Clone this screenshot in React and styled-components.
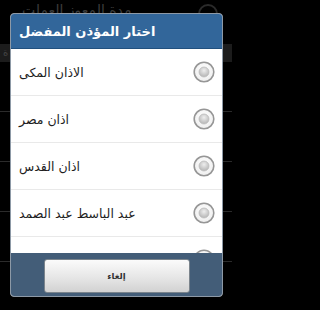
import styled, { createGlobalStyle } from 'styled-components';

const GlobalStyle = createGlobalStyle`
  html, body {
    margin: 0;
    padding: 0;
    background: #000;
  }
  body {
    width: 232px;
    height: 310px;
    overflow: hidden;
    font-family: "DejaVu Sans", "Noto Sans", sans-serif;
  }
`;

// Background activity (dimmed)
const Screen = styled.div`
  position: relative;
  width: 232px;
  height: 310px;
  background: #000;
  overflow: hidden;
`;

const BgTop = styled.div`
  height: 44px;
  display: flex;
  justify-content: space-between;
  align-items: flex-start;
  padding: 0 14px 0 22px;
  box-sizing: border-box;
`;

const BgTitle = styled.span`
  direction: rtl;
  font-size: 14px;
  line-height: 18px;
  margin-top: 1px;
  color: #3c3c3c;
`;

const BgCircle = styled.span`
  width: 16px;
  height: 16px;
  margin-top: 4px;
  border-radius: 50%;
  border: 2px solid #2a2a2a;
`;

const BgHeader = styled.div`
  height: 18px;
  background: #1c1c1c;
  color: #444;
  font-size: 10px;
  line-height: 18px;
  padding-left: 3px;
`;

const BgRow = styled.div`
  height: 49px;
  border-bottom: 1px solid #2b2b2b;
`;

// Dialog
const Dialog = styled.div`
  position: absolute;
  left: 10px;
  top: 13px;
  width: 213px;
  height: 284px;
  box-sizing: border-box;
  border: 1px solid #8d99a6;
  border-radius: 4px;
  overflow: hidden;
  display: flex;
  flex-direction: column;
  background: #fff;
`;

const TitleBar = styled.div`
  height: 34px;
  flex: none;
  background: #32669a;
  border-bottom: 1px solid #21507e;
  display: flex;
  align-items: center;
  padding-left: 8px;
`;

const Title = styled.span`
  direction: rtl;
  color: #fff;
  font-size: 13px;
  font-weight: bold;
`;

const List = styled.div`
  height: 204px;
  flex: none;
  overflow: hidden;
  background: #fff;
`;

const Row = styled.div`
  height: 46px;
  border-bottom: 1px solid #e9e9e9;
  display: flex;
  align-items: center;
  justify-content: space-between;
  padding: 0 7px 0 8px;
`;

const Label = styled.span`
  direction: rtl;
  color: #1e1e1e;
  font-size: 12.5px;
`;

const Footer = styled.div`
  flex: 1;
  background: #435d78;
  display: flex;
  justify-content: center;
  padding-top: 6px;
`;

const Button = styled.button`
  width: 146px;
  height: 34px;
  border: 1px solid #7b848c;
  border-radius: 3px;
  background: linear-gradient(#fbfbfb, #e4e4e4 60%, #d2d2d2);
  font-family: "DejaVu Sans", sans-serif;
  font-size: 8.5px;
  font-weight: bold;
  color: #333;
  direction: rtl;
  padding: 0;
`;

const Radio = () => (
  <svg width="22" height="22" viewBox="0 0 22 22">
    <defs>
      <radialGradient id="ring" cx="50%" cy="40%" r="60%">
        <stop offset="0%" stopColor="#ffffff" />
        <stop offset="100%" stopColor="#eeeeee" />
      </radialGradient>
      <radialGradient id="dot" cx="50%" cy="35%" r="65%">
        <stop offset="0%" stopColor="#eeeeee" />
        <stop offset="100%" stopColor="#b4b4b4" />
      </radialGradient>
    </defs>
    <circle cx="11" cy="11" r="9.8" fill="url(#ring)" stroke="#969696" strokeWidth="1.6" />
    <circle cx="11" cy="11" r="5" fill="url(#dot)" stroke="#bdbdbd" strokeWidth="0.8" />
  </svg>
);

// the last entry sits under the footer, only its radio top shows
const options = [
  'الاذان المكى',
  'اذان مصر',
  'اذان القدس',
  'عبد الباسط عبد الصمد',
  '',
];

export default function App() {
  return (
    <>
      <GlobalStyle />
      <Screen>
        <BgTop>
          <BgTitle>مدة المعوز العملت</BgTitle>
          <BgCircle />
        </BgTop>
        <BgHeader>ة</BgHeader>
        {[0, 1, 2, 3, 4].map((i) => (
          <BgRow key={i} />
        ))}

        <Dialog>
          <TitleBar>
            <Title>اختار المؤذن المفضل</Title>
          </TitleBar>
          <List>
            {options.map((name, i) => (
              <Row key={i}>
                <Label>{name}</Label>
                <Radio />
              </Row>
            ))}
          </List>
          <Footer>
            <Button>إلغاء</Button>
          </Footer>
        </Dialog>
      </Screen>
    </>
  );
}
